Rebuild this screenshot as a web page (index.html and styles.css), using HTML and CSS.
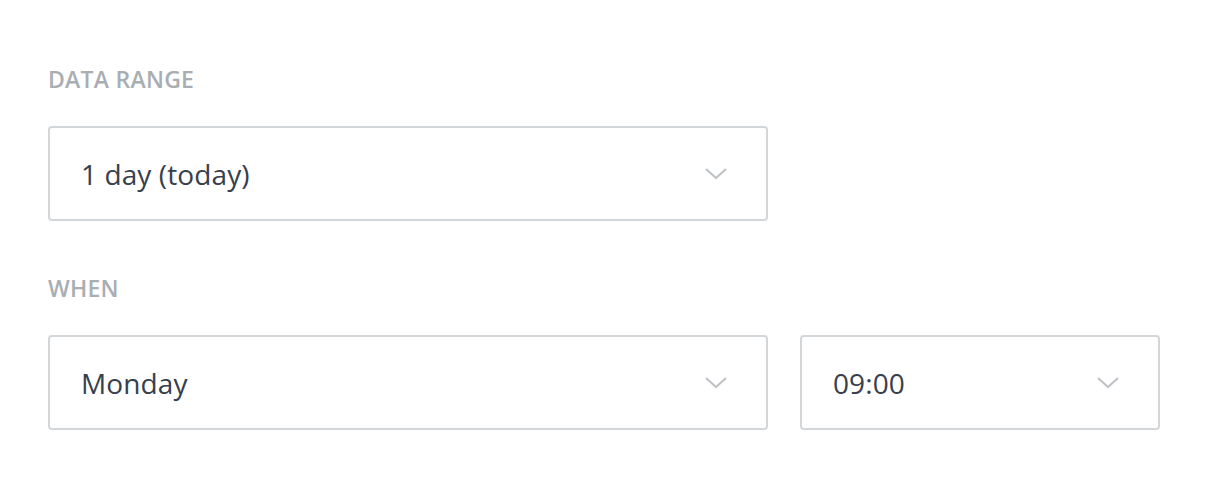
FILE: index.html
```html
<!DOCTYPE html>
<html>
<head>
<meta charset="utf-8">
<link rel="stylesheet" href="styles.css">
</head>
<body>
<div class="form">
  <div class="field">
    <div class="label">Data range</div>
    <div class="row">
      <div class="select wide">
        <span class="value">1 day (today)</span>
        <svg class="chev" width="24" height="14" viewBox="0 0 24 14"><path d="M2 2 L12 11 L22 2" fill="none" stroke="#c0c4c8" stroke-width="2.2"/></svg>
      </div>
    </div>
  </div>
  <div class="field">
    <div class="label">When</div>
    <div class="row">
      <div class="select wide">
        <span class="value">Monday</span>
        <svg class="chev" width="24" height="14" viewBox="0 0 24 14"><path d="M2 2 L12 11 L22 2" fill="none" stroke="#c0c4c8" stroke-width="2.2"/></svg>
      </div>
      <div class="select narrow">
        <span class="value">09:00</span>
        <svg class="chev" width="24" height="14" viewBox="0 0 24 14"><path d="M2 2 L12 11 L22 2" fill="none" stroke="#c0c4c8" stroke-width="2.2"/></svg>
      </div>
    </div>
  </div>
</div>
</body>
</html>
```

FILE: styles.css
```css
html, body {
  margin: 0;
  padding: 0;
  background: #ffffff;
}
body {
  font-family: "Open Sans", "Liberation Sans", sans-serif;
}
.form {
  padding: 63px 48px 0 48px;
  display: flex;
  flex-direction: column;
  gap: 51px;
}
.field {
  display: flex;
  flex-direction: column;
  gap: 31px;
}
.label {
  text-transform: uppercase;
  font-size: 23px;
  font-weight: 600;
  color: #a9aeb3;
  line-height: 32px;
  letter-spacing: 0.25px;
}
.row {
  display: flex;
  gap: 32px;
}
.select {
  box-sizing: border-box;
  height: 95px;
  border: 2px solid #d3d7d9;
  border-radius: 4px;
  display: flex;
  align-items: center;
  justify-content: space-between;
  padding: 0 38px 0 31px;
}
.wide { width: 720px; }
.narrow { width: 360px; }
.value {
  font-size: 28px;
  color: #37404c;
  letter-spacing: 0.1px;
}
.chev { display: block; }
```
